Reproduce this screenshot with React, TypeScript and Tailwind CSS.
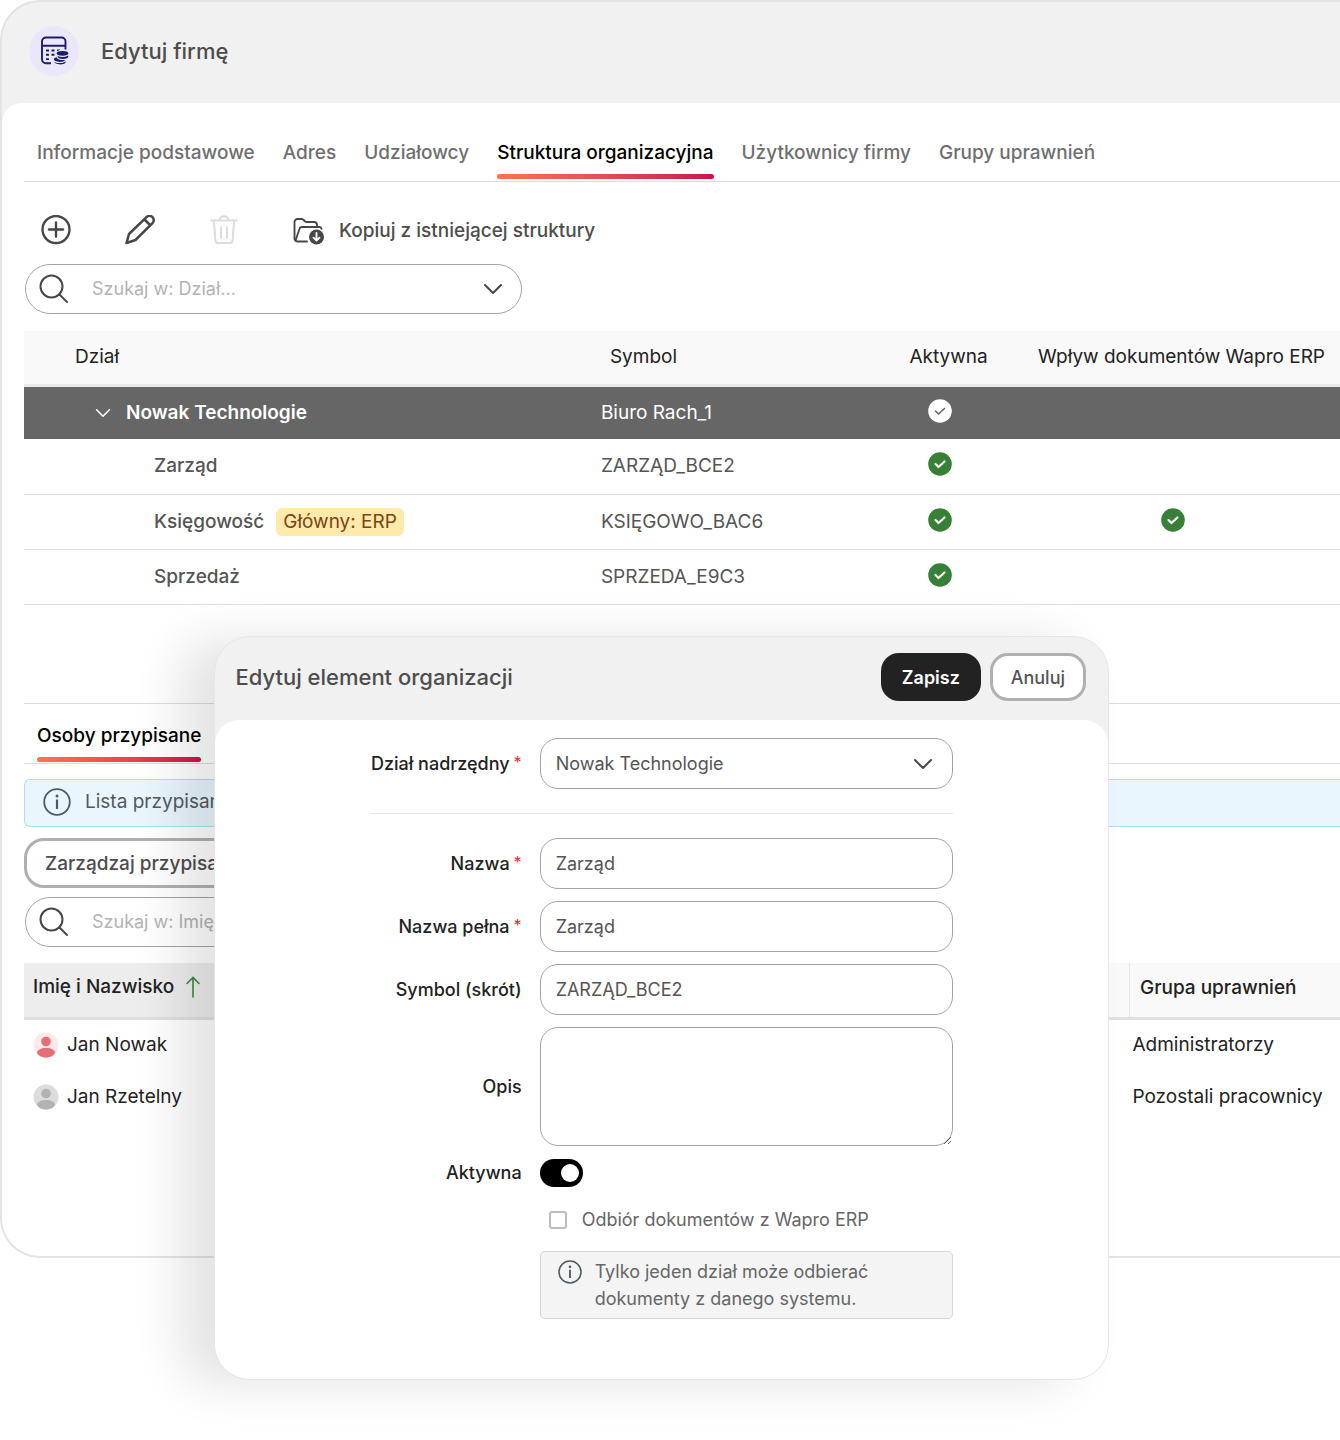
import { ReactNode, useState } from "react";

const tabs = [
  "Informacje podstawowe",
  "Adres",
  "Udziałowcy",
  "Struktura organizacyjna",
  "Użytkownicy firmy",
  "Grupy uprawnień",
];

const departments = [
  { name: "Zarząd", symbol: "ZARZĄD_BCE2", active: true, erp: false },
  { name: "Księgowość", symbol: "KSIĘGOWO_BAC6", active: true, erp: true, badge: "Główny: ERP" },
  { name: "Sprzedaż", symbol: "SPRZEDA_E9C3", active: true, erp: false },
];

const people = [
  { name: "Jan Nowak", group: "Administratorzy", bg: "#fde8ea", fg: "#e56d73" },
  { name: "Jan Rzetelny", group: "Pozostali pracownicy", bg: "#dcdcdc", fg: "#b3b3b3" },
];

function CompanyIcon() {
  return (
    <svg width="30" height="30" viewBox="0 0 30 30" fill="none" stroke="#1f1b6b" strokeWidth="1.900" aria-hidden="true">
      <path d="M11 27.200H6a4 4 0 0 1-4-4V5.500a4 4 0 0 1 4-4h15.500a4 4 0 0 1 4 4V13.500M2 9.800h23.500" />
      <path d="M6 14.500h3M11.500 14.500h3M17 14.500h3M6 18.800h3M11.500 18.800h3M6 23.100h3" />
      <g fill="#1f1b6b" stroke="#eae7fa" strokeWidth="1.200">
        <ellipse cx="20" cy="26" rx="6.200" ry="3" />
        <ellipse cx="19.500" cy="23.500" rx="6.200" ry="3" />
        <ellipse cx="23" cy="20.500" rx="6" ry="3" />
        <ellipse cx="22.500" cy="17.300" rx="6.500" ry="3" />
      </g>
    </svg>
  );
}

function PlusIcon() {
  return (
    <svg width="30" height="30" viewBox="0 0 30 30" fill="none" stroke="#474747" strokeWidth="2.400" strokeLinecap="round" aria-hidden="true">
      <circle cx="15" cy="14.500" r="13.500" />
      <path d="M15 7.500v14M8 14.500h14" />
    </svg>
  );
}

function PencilIcon() {
  return (
    <svg width="30" height="30" viewBox="0 0 30 30" fill="none" stroke="#474747" strokeWidth="2.500" strokeLinejoin="round" aria-hidden="true">
      <path d="M1.500 28l2.500-9L21.500 2.200a4.200 4.200 0 0 1 6 6L10.500 25z" />
      <path d="M19.500 4.500l5.500 5.500" />
    </svg>
  );
}

function TrashIcon() {
  return (
    <svg width="30" height="30" viewBox="0 0 30 30" fill="none" stroke="#dedede" strokeWidth="2.200" strokeLinecap="round" aria-hidden="true">
      <path d="M2 5.500h26M10.500 5.500c0-5.500 9-5.500 9 0M5 6.500l1.300 18.500a3 3 0 0 0 3 3h11.400a3 3 0 0 0 3-3L25 6.500" />
      <path d="M12 12v10.500M18 12v10.500" />
    </svg>
  );
}

function CopyFolderIcon() {
  return (
    <svg width="32" height="30" viewBox="0 0 32 30" fill="none" stroke="#474747" strokeWidth="1.900" strokeLinecap="round" strokeLinejoin="round" aria-hidden="true">
      <path d="M14 25.500H4.500a3 3 0 0 1-3-3V6a3 3 0 0 1 3-3h4.300c2 0 2.700 3 4.700 3H21a3 3 0 0 1 3 3v1.500" />
      <path d="M2.500 24.500L6.500 13a2.500 2.500 0 0 1 2.500-2h17a2.500 2.500 0 0 1 2.500 1.700" />
      <circle cx="23.500" cy="21" r="7.500" fill="#474747" stroke="none" />
      <path d="M23.500 17v7.500M20.500 21.700l3 3 3-3" stroke="#fff" />
    </svg>
  );
}

function SearchIcon() {
  return (
    <svg width="30" height="30" viewBox="0 0 30 30" fill="none" stroke="#474747" strokeWidth="2" strokeLinecap="round" aria-hidden="true">
      <circle cx="12.500" cy="12.500" r="11" />
      <path d="M20.500 20.500l7.500 7.500" />
    </svg>
  );
}

function ChevronIcon({ small = false }: { small?: boolean }) {
  return (
    <svg width={small ? 16 : 20} height={small ? 10 : 12} viewBox="0 0 20 12" fill="none" stroke="currentColor" strokeWidth="2" strokeLinecap="round" strokeLinejoin="round" aria-hidden="true">
      <path d="M2 2l8 8 8-8" />
    </svg>
  );
}

function InfoIcon({ size }: { size: number }) {
  return (
    <svg width={size} height={size} viewBox="0 0 28 28" fill="none" stroke="#4f5a5f" strokeWidth="1.800" className="shrink-0" aria-hidden="true">
      <circle cx="14" cy="14" r="12.800" />
      <path d="M14 11.500v9.500" strokeWidth="2.200" />
      <circle cx="14" cy="8" r="1.500" fill="#4f5a5f" stroke="none" />
    </svg>
  );
}

function CheckBadge({ inverted = false }: { inverted?: boolean }) {
  return (
    <svg width="24" height="24" viewBox="0 0 24 24" fill="none" className="mx-auto mb-1" role="img" aria-label="Tak">
      <circle cx="12" cy="12" r="11.800" fill={inverted ? "#fff" : "#388038"} />
      <path d="M7.500 12l3 3 6-5.500" stroke={inverted ? "#666" : "#fff"} strokeWidth={inverted ? 1.6 : 2.2} strokeLinecap="round" strokeLinejoin="round" />
    </svg>
  );
}

function Avatar({ bg, fg }: { bg: string; fg: string }) {
  return (
    <svg width="26" height="26" viewBox="0 0 26 26" className="shrink-0" aria-hidden="true">
      <circle cx="13" cy="13" r="12.500" fill={bg} />
      <circle cx="13" cy="9.500" r="4.800" fill={fg} />
      <path d="M4 21c0-3 4-5 9-5s9 2 9 5c-1.500 3-5.500 4.500-9 4.500S5.500 24 4 21z" fill={fg} />
    </svg>
  );
}

function SearchBox({ id, placeholder }: { id: string; placeholder: string }) {
  return (
    <div className="ml-px flex h-[50px] w-[497px] max-w-full items-center rounded-full border border-[#a3a3a3] pl-[13px] pr-[18px]">
      <label htmlFor={id} aria-label={placeholder}>
        <SearchIcon />
      </label>
      <input id={id} type="text" placeholder={placeholder} className="ml-[23px] min-w-0 flex-1 text-lg outline-none placeholder:text-[#b3b3b3]" />
      <button type="button" aria-label="Rozwiń" className="text-[#474747]">
        <ChevronIcon />
      </button>
    </div>
  );
}

function Tab({ label, active = false }: { label: string; active?: boolean }) {
  return (
    <button
      type="button"
      role="tab"
      aria-selected={active}
      className={active ? "flex flex-col whitespace-nowrap font-medium text-black" : "flex flex-col whitespace-nowrap font-medium text-[#6f6f6f]"}
    >
      <span className="h-[35px] leading-7">{label}</span>
      {active && <span className="h-[5px] w-full rounded-full bg-linear-to-r from-[#ff7350] to-[#cc0f4c]" />}
    </button>
  );
}

function Field({ id, label, required = false, children }: { id: string; label: string; required?: boolean; children: ReactNode }) {
  return (
    <>
      <label htmlFor={id} className="flex items-center justify-end whitespace-nowrap font-medium text-[#222]">
        {label}
        {required && <span className="mb-1 ml-1 text-base font-normal text-[#e0303a]">*</span>}
      </label>
      {children}
    </>
  );
}

const inputStyle = "h-[51px] w-full rounded-[18px] border border-[#a3a3a3] bg-white px-[15px] text-[#555] outline-none";

function EditDialog() {
  const [active, setActive] = useState(true);
  const [erp, setErp] = useState(false);

  return (
    <section
      role="dialog"
      aria-labelledby="dialog-title"
      className="absolute left-[16%] right-[17.25%] top-[636px] overflow-hidden rounded-[36px] border border-[#e6e6e6] bg-[#f1f1f1] shadow-[-34px_4px_50px_rgba(0,0,0,0.11)]"
    >
      <header className="flex h-[83px] items-center justify-between pb-1 pl-5 pr-[22px]">
        <h2 id="dialog-title" className="text-[22px] font-medium text-[#4d4d4d]">
          Edytuj element organizacji
        </h2>
        <div className="flex gap-[9px] text-lg">
          <button type="button" className="h-12 w-[100px] rounded-[18px] bg-[#222] pt-0.5 font-semibold text-white">
            Zapisz
          </button>
          <button type="button" className="h-12 w-24 rounded-[18px] border-[3px] border-[#b0b0b0] bg-white pt-0.5 font-medium text-[#555]">
            Anuluj
          </button>
        </div>
      </header>

      <form className="rounded-t-[24px] bg-white px-6 pb-[60px] pt-[18px] text-lg">
        <div className="mx-auto grid max-w-[582px] grid-cols-[151px_1fr] gap-x-[18px] gap-y-3">
          <Field id="parent" label="Dział nadrzędny" required>
            <div className="relative">
              <select id="parent" className={`${inputStyle} appearance-none`}>
                <option>Nowak Technologie</option>
              </select>
              <span className="pointer-events-none absolute inset-y-0 right-5 flex items-center text-[#474747]">
                <ChevronIcon />
              </span>
            </div>
          </Field>

          <hr className="col-span-2 my-3 border-[#e5e5e5]" />

          <Field id="name" label="Nazwa" required>
            <input id="name" type="text" defaultValue="Zarząd" className={inputStyle} />
          </Field>
          <Field id="full-name" label="Nazwa pełna" required>
            <input id="full-name" type="text" defaultValue="Zarząd" className={inputStyle} />
          </Field>
          <Field id="symbol" label="Symbol (skrót)">
            <input id="symbol" type="text" defaultValue="ZARZĄD_BCE2" className={inputStyle} />
          </Field>
          <Field id="description" label="Opis">
            <textarea id="description" className="block h-[119px] w-full rounded-[18px] border border-[#a3a3a3] px-[15px] py-2 outline-none" />
          </Field>
          <Field id="active" label="Aktywna">
            <label className="flex h-[30px] items-center">
              <input id="active" type="checkbox" role="switch" checked={active} onChange={() => setActive(!active)} className="peer sr-only" />
              <span className="flex h-7 w-[43px] items-center rounded-full bg-gray-400 px-1 peer-checked:justify-end peer-checked:bg-black">
                <span className="size-[18px] rounded-full bg-white" />
              </span>
            </label>
          </Field>

          <div className="col-start-2 flex flex-col gap-[15px]">
            <label className="ml-[9px] mt-1 flex h-8 items-center gap-[15px] whitespace-nowrap text-[#666]">
              <input
                type="checkbox"
                checked={erp}
                onChange={() => setErp(!erp)}
                className="size-[18px] appearance-none rounded-[3px] border-2 border-[#bdbdbd] bg-white checked:bg-black"
              />
              Odbiór dokumentów z Wapro ERP
            </label>
            <div className="flex gap-[13px] rounded-[5px] border border-[#d6d6d6] bg-[#f4f4f4] px-[17px] py-[6px] leading-[27px] text-[#666]">
              <span className="flex h-[27px] items-center">
                <InfoIcon size={24} />
              </span>
              <p>
                Tylko jeden dział może odbierać
                <br />
                dokumenty z danego systemu.
              </p>
            </div>
          </div>
        </div>
      </form>
    </section>
  );
}

export default function App() {
  return (
    <div className="relative min-h-[1440px] overflow-hidden bg-white font-['Inter','Liberation_Sans',sans-serif] text-[19px] leading-7">
      <main className="overflow-hidden rounded-l-[40px] border-2 border-r-0 border-[#e3e3e3] bg-[#f1f1f1]">
        <header className="flex h-[101px] items-center gap-[22px] pb-1 pl-[27px]">
          <span className="flex size-[50px] items-center justify-center rounded-full bg-[#eae7fa] pl-0.5">
            <CompanyIcon />
          </span>
          <h1 className="text-[22px] font-medium text-[#4d4d4d]">Edytuj firmę</h1>
        </header>

        <div className="rounded-tl-[20px] bg-white pb-[133px] pl-[22px] pt-[36px]">
          <nav role="tablist" className="flex h-[43px] gap-7 border-b border-[#dcdcdc] pl-[13px]">
            {tabs.map((tab) => (
              <Tab key={tab} label={tab} active={tab === "Struktura organizacyjna"} />
            ))}
          </nav>

          <div className="flex h-[82px] items-center gap-[54px] pl-[17px] pt-[14px]">
            <button type="button" aria-label="Dodaj">
              <PlusIcon />
            </button>
            <button type="button" aria-label="Edytuj">
              <PencilIcon />
            </button>
            <button type="button" aria-label="Usuń" disabled>
              <TrashIcon />
            </button>
            <button type="button" className="flex items-center gap-[14px] whitespace-nowrap pt-0.5 font-medium text-[#4d4d4d]">
              <CopyFolderIcon />
              Kopiuj z istniejącej struktury
            </button>
          </div>

          <SearchBox id="search-department" placeholder="Szukaj w: Dział..." />

          <table className="mt-[17px] w-full table-fixed text-left">
            <colgroup>
              <col className="w-[43%]" />
              <col className="w-[21%]" />
              <col className="w-[11%]" />
              <col />
            </colgroup>
            <thead>
              <tr className="h-[54px] border-b-3 border-[#e8e8e8] bg-[#f9f9f9] text-[#222]">
                <th className="pl-[51px] font-normal">Dział</th>
                <th className="pl-5 font-normal">Symbol</th>
                <th className="pl-5 text-center font-normal">Aktywna</th>
                <th className="whitespace-nowrap pl-3 text-center font-normal">Wpływ dokumentów Wapro ERP</th>
              </tr>
            </thead>
            <tbody>
              <tr className="h-[54px] bg-[#666] text-white">
                <td className="pl-[71px]">
                  <button type="button" className="flex items-center gap-[15px] font-semibold">
                    <ChevronIcon small />
                    Nowak Technologie
                  </button>
                </td>
                <td className="pl-[11px]">Biuro Rach_1</td>
                <td className="pl-0.5">
                  <CheckBadge inverted />
                </td>
                <td />
              </tr>
              {departments.map((item) => (
                <tr key={item.name} className="h-[55px] border-b border-[#dfdfdf] text-[#555]">
                  <td className="pl-[130px] font-medium">
                    {item.name}
                    {item.badge && (
                      <span className="ml-3 inline-block rounded-md bg-[#ffe9ab] px-[7px] font-normal text-[#7a4510]">{item.badge}</span>
                    )}
                  </td>
                  <td className="pl-[11px]">{item.symbol}</td>
                  <td className="pl-0.5">{item.active && <CheckBadge />}</td>
                  <td className="pr-1">{item.erp && <CheckBadge />}</td>
                </tr>
              ))}
            </tbody>
          </table>

          <section className="mt-[98px] border-t border-[#dcdcdc]">
            <div role="tablist" className="flex h-[60px] border-b border-[#dcdcdc] pl-[13px] pt-[18px]">
              <Tab label="Osoby przypisane" active />
            </div>

            <div className="mt-[15px] flex h-12 items-center gap-[14px] rounded-l-md border border-r-0 border-[#a9e0f7] bg-[#e9f6fe] pb-0.5 pl-[18px] text-[#4f5a5f]">
              <InfoIcon size={28} />
              Lista przypisanych osób
            </div>

            <button type="button" className="mt-[11px] block h-[50px] rounded-[20px] border-[3px] border-[#b0b0b0] px-[18px] pt-0.5 font-medium text-[#4d4d4d]">
              Zarządzaj przypisaniami
            </button>

            <div className="mt-[9px]">
              <SearchBox id="search-person" placeholder="Szukaj w: Imię i Nazwisko..." />
            </div>

            <table className="mt-4 w-full table-fixed text-left text-[#222]">
              <colgroup>
                <col className="w-[32%]" />
                <col className="w-[52%]" />
                <col />
              </colgroup>
              <thead>
                <tr className="h-[56px] border-b-3 border-[#e0e0e0] bg-[#f9f9f9]">
                  <th className="bg-[#ededed] pb-1.5 pl-[9px] font-medium">
                    <span className="flex items-center gap-3">
                      Imię i Nazwisko
                      <svg width="14" height="22" viewBox="0 0 14 22" fill="none" stroke="#3a8a3d" strokeWidth="1.600" strokeLinecap="round" aria-hidden="true">
                        <path d="M7 21V1.500M1 7.500l6-6 6 6" />
                      </svg>
                    </span>
                  </th>
                  <th />
                  <th className="border-l border-[#e6e6e6] pb-1 pl-[10px] font-medium">Grupa uprawnień</th>
                </tr>
              </thead>
              <tbody>
                {people.map((person) => (
                  <tr key={person.name} className="h-[52px]">
                    <td className="pl-[9px]">
                      <span className="flex items-center gap-2">
                        <Avatar bg={person.bg} fg={person.fg} />
                        {person.name}
                      </span>
                    </td>
                    <td />
                    <td className="whitespace-nowrap pl-[3px]">{person.group}</td>
                  </tr>
                ))}
              </tbody>
            </table>
          </section>
        </div>
      </main>

      <EditDialog />
    </div>
  );
}
